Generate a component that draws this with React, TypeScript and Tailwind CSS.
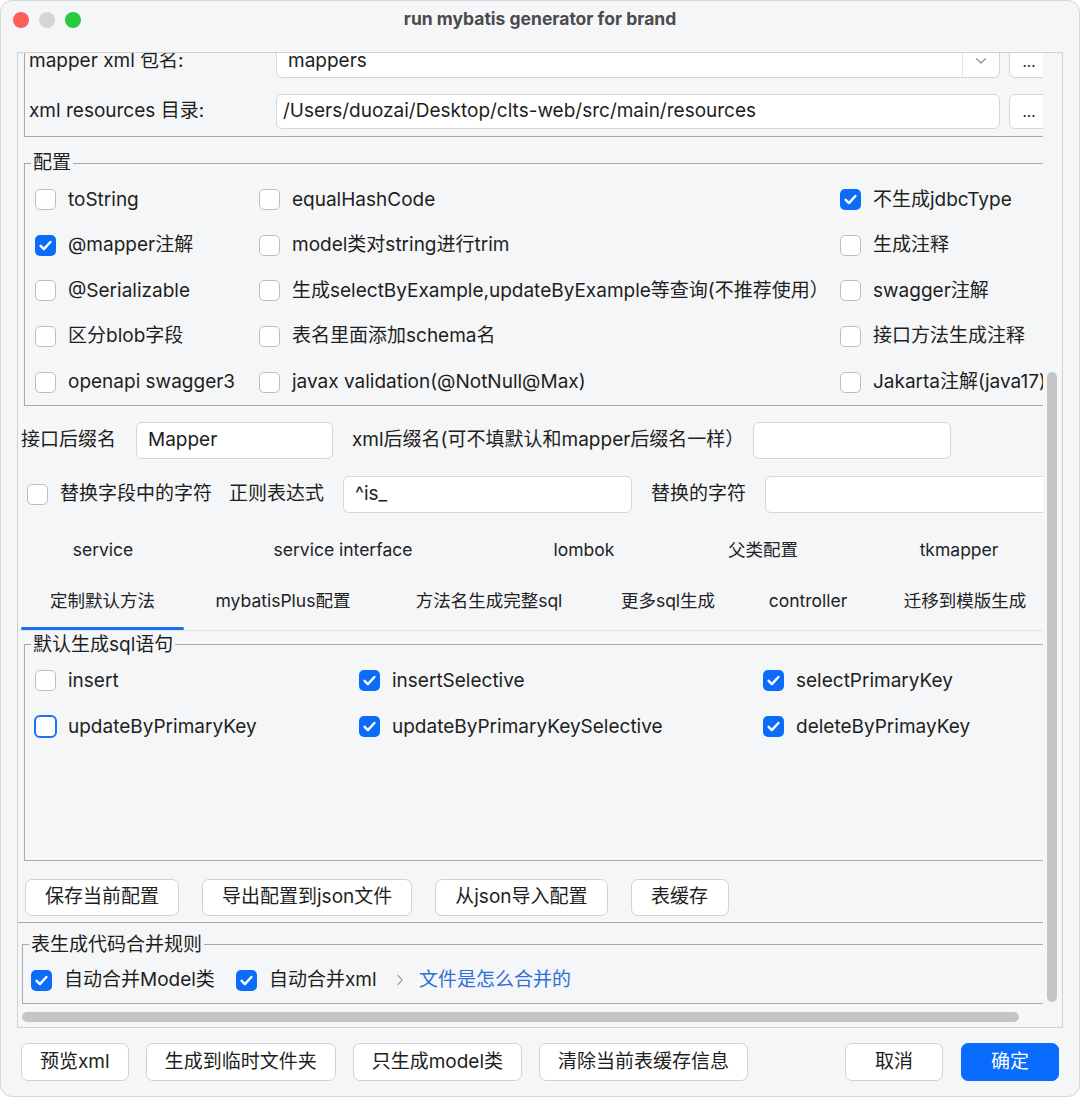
import React from 'react'

const labelColor = 'text-[#1e1e20]'

function Check({ checked = false, focus = false }: { checked?: boolean; focus?: boolean }) {
  if (checked) {
    return (
      <span className="flex h-[21px] w-[21px] shrink-0 items-center justify-center rounded-[5px] bg-[#0b6cf9]">
        <svg width="21" height="21" viewBox="0 0 21 21" fill="none">
          <path d="M5.6 10.8 L8.9 14.1 L15.4 7" stroke="white" strokeWidth="2.4" strokeLinecap="round" strokeLinejoin="round" />
        </svg>
      </span>
    )
  }
  if (focus) {
    return <span className="-m-px h-[23px] w-[23px] shrink-0 rounded-[6px] border-2 border-[#1a73f7] bg-white" />
  }
  return <span className="h-[21px] w-[21px] shrink-0 rounded-[5px] border border-[#b9bdca] bg-white" />
}

function CheckItem({ label, checked, focus }: { label: string; checked?: boolean; focus?: boolean }) {
  return (
    <div className="flex items-center gap-[12px] whitespace-nowrap">
      <Check checked={checked} focus={focus} />
      <span className={labelColor}>{label}</span>
    </div>
  )
}

function Field({ value, className = '' }: { value?: string; className?: string }) {
  return (
    <div className={`flex h-full items-center whitespace-nowrap rounded-[6px] border border-[#d3d6dc] bg-white pl-[11px] ${className}`}>
      {value}
    </div>
  )
}

function Btn({ children, primary = false, h = 'h-[37px]', px = 'px-[19px]' }: { children: React.ReactNode; primary?: boolean; h?: string; px?: string }) {
  return (
    <button
      className={`${h} ${px} min-w-[98px] whitespace-nowrap rounded-[7px] border ${
        primary ? 'border-[#0a6cfe] bg-[#0a6cfe] text-white' : 'border-[#cfd2d8] bg-white text-[#1e1e20]'
      }`}
    >
      {children}
    </button>
  )
}

function Legend({ children }: { children: React.ReactNode }) {
  return <legend className="ml-[6px] px-[2px] leading-[26px] text-[#1e1e20]">{children}</legend>
}

const config: [string, boolean][] = [
  ['toString', false],
  ['equalHashCode', false],
  ['不生成jdbcType', true],
  ['@mapper注解', true],
  ['model类对string进行trim', false],
  ['生成注释', false],
  ['@Serializable', false],
  ['生成selectByExample,updateByExample等查询(不推荐使用）', false],
  ['swagger注解', false],
  ['区分blob字段', false],
  ['表名里面添加schema名', false],
  ['接口方法生成注释', false],
  ['openapi swagger3', false],
  ['javax validation(@NotNull@Max)', false],
  ['Jakarta注解(java17)', false],
]

const tabsTop: [string, number][] = [
  ['service', 164],
  ['service interface', 316],
  ['lombok', 166],
  ['父类配置', 192],
  ['tkmapper', 200],
]

const tabsBottom: [string, number][] = [
  ['定制默认方法', 163],
  ['mybatisPlus配置', 198],
  ['方法名生成完整sql', 214],
  ['更多sql生成', 144],
  ['controller', 136],
  ['迁移到模版生成', 178],
]

export default function App() {
  return (
    <div className="h-[1097px] w-[1080px] bg-white font-['Inter','Noto_Sans_CJK_SC',sans-serif] text-[19px] text-[#1e1e20]">
      <div className="flex h-full flex-col overflow-hidden rounded-[12px] border border-[#d6d7da] bg-[#f5f6f8]">
        {/* title bar */}
        <div className="grid h-[37px] shrink-0 grid-cols-[1fr_auto_1fr] items-center">
          <div className="flex gap-[10px] pl-[12px]">
            <span className="h-[16px] w-[16px] rounded-full bg-[#ff5f57]" />
            <span className="h-[16px] w-[16px] rounded-full bg-[#d5d5d8]" />
            <span className="h-[16px] w-[16px] rounded-full bg-[#28c840]" />
          </div>
          <span className="text-[17.5px] font-bold text-[#4b4b4e]">run mybatis generator for brand</span>
          <div />
        </div>

        {/* scroll pane */}
        <div className="ml-[16px] mt-[14px] grid h-[976px] w-[1046px] shrink-0 grid-cols-[1025px_19px] grid-rows-[952px_22px] border border-[#d0d2d6]">
          <div className="overflow-hidden">
            <div className="-mt-[9px] w-[1049px]">
              {/* package panel, scrolled partly out of view */}
              <div className="mx-[6px] border-x border-b border-[#a9a9a9] pb-[7px] pl-[4px]">
                <div className="flex h-[34px] items-center">
                  <span className="w-[247px] whitespace-nowrap leading-[12px]">mapper xml 包名:</span>
                  <div className="flex h-full w-[724px] rounded-[6px] border border-[#d3d6dc] bg-white">
                    <span className="flex flex-1 items-center pl-[11px] leading-[12px]">mappers</span>
                    <span className="flex w-[37px] items-center justify-center border-l border-[#e1e3e7]">
                      <svg width="12" height="8" viewBox="0 0 12 8" fill="none">
                        <path d="M1.5 1.8 L6 6 L10.5 1.8" stroke="#8d8f94" strokeWidth="1.2" strokeLinecap="round" strokeLinejoin="round" />
                      </svg>
                    </span>
                  </div>
                  <button className="ml-[9px] h-full w-[40px] rounded-[6px] border border-[#d3d6dc] bg-white text-[15px] leading-none">...</button>
                </div>
                <div className="mt-[16px] flex h-[35px] items-center">
                  <span className="w-[247px] whitespace-nowrap">xml resources 目录:</span>
                  <Field value="/Users/duozai/Desktop/clts-web/src/main/resources" className="w-[724px] !pl-[6px]" />
                  <button className="ml-[9px] h-full w-[40px] rounded-[6px] border border-[#d3d6dc] bg-white text-[15px] leading-none">...</button>
                </div>
              </div>

              {/* 配置 */}
              <fieldset className="ml-[6px] mt-[13px] w-[1037px] border border-[#a9a9a9]">
                <Legend>配置</Legend>
                <div className="grid grid-cols-[224px_581px_1fr] auto-rows-[45.6px] items-center pl-[10px] pt-[1px]">
                  {config.map(([label, checked]) => (
                    <CheckItem key={label} label={label} checked={checked} />
                  ))}
                </div>
              </fieldset>

              {/* suffix row */}
              <div className="mt-[16px] flex h-[37px] items-center">
                <span className="w-[118px] whitespace-nowrap pl-[3px]">接口后缀名</span>
                <Field value="Mapper" className="w-[197px]" />
                <span className="w-[420px] whitespace-nowrap pl-[19px]">xml后缀名(可不填默认和mapper后缀名一样）</span>
                <Field className="w-[198px]" />
              </div>

              {/* replace row */}
              <div className="mt-[17px] flex h-[37px] items-center">
                <div className="w-[211px] pl-[9px]">
                  <CheckItem label="替换字段中的字符" />
                </div>
                <span className="w-[114px] whitespace-nowrap">正则表达式</span>
                <Field value="^is_" className="w-[289px]" />
                <span className="w-[133px] whitespace-nowrap pl-[19px]">替换的字符</span>
                <Field className="flex-1" />
              </div>

              {/* tabs */}
              <div className="mt-[12px] text-[17.5px] text-[#222224]">
                <div className="flex h-[51px] items-center pl-[3px]">
                  {tabsTop.map(([t, w]) => (
                    <span key={t} className="shrink-0 whitespace-nowrap text-center" style={{ width: w }}>
                      {t}
                    </span>
                  ))}
                </div>
                <div className="flex pl-[3px]">
                  {tabsBottom.map(([t, w], i) => (
                    <div key={t} className="flex h-[54px] shrink-0 flex-col" style={{ width: w }}>
                      <span className="flex h-[51px] items-center justify-center whitespace-nowrap">{t}</span>
                      {i === 0 && <span className="h-[3px] rounded-full bg-[#1670f0]" />}
                    </div>
                  ))}
                </div>
              </div>

              {/* tab content */}
              <div className="border-b border-t border-b-[#a9a9a9] border-t-[#e3e4e7] pb-[6px]">
                <fieldset className="ml-[6px] mt-[1px] w-[1037px] border border-[#a9a9a9]">
                  <Legend>默认生成sql语句</Legend>
                  <div className="h-[202px]">
                    <div className="grid grid-cols-[324px_404px_1fr] auto-rows-[46px] items-center pl-[10px]">
                      <CheckItem label="insert" />
                      <CheckItem label="insertSelective" checked />
                      <CheckItem label="selectPrimaryKey" checked />
                      <CheckItem label="updateByPrimaryKey" focus />
                      <CheckItem label="updateByPrimaryKeySelective" checked />
                      <CheckItem label="deleteByPrimayKey" checked />
                    </div>
                  </div>
                </fieldset>
                <div className="mt-[18px] flex gap-[23px] pl-[7px]">
                  <Btn>保存当前配置</Btn>
                  <Btn>导出配置到json文件</Btn>
                  <Btn>从json导入配置</Btn>
                  <Btn>表缓存</Btn>
                </div>
              </div>

              {/* merge rules */}
              <fieldset className="ml-[4px] mt-[9px] w-[1043px] border border-[#a9a9a9]">
                <Legend>表生成代码合并规则</Legend>
                <div className="flex h-[45px] items-center pl-[8px]">
                  <div className="w-[205px]">
                    <CheckItem label="自动合并Model类" checked />
                  </div>
                  <div className="w-[160px]">
                    <CheckItem label="自动合并xml" checked />
                  </div>
                  <span className="flex w-[23px] items-center">
                    <svg width="8" height="12" viewBox="0 0 8 12" fill="none">
                      <path d="M2 1.5 L6.2 6 L2 10.5" stroke="#a2a4a8" strokeWidth="1.3" strokeLinecap="round" strokeLinejoin="round" />
                    </svg>
                  </span>
                  <span className="whitespace-nowrap text-[#2f6fd9]">文件是怎么合并的</span>
                </div>
              </fieldset>
            </div>
          </div>

          {/* vertical scrollbar */}
          <div className="pl-[4px] pt-[319px]">
            <div className="h-[630px] w-[10px] rounded-full bg-[#c5c5c8]" />
          </div>

          {/* horizontal scrollbar */}
          <div className="pl-[4px] pt-[7px]">
            <div className="h-[10px] w-[997px] rounded-full bg-[#c5c5c8]" />
          </div>
          <div />
        </div>

        {/* bottom buttons */}
        <div className="mx-[20px] mt-[15px] flex justify-between">
          <div className="flex gap-[17px]">
            <Btn h="h-[38px]" px="px-[18px]">预览xml</Btn>
            <Btn h="h-[38px]" px="px-[18px]">生成到临时文件夹</Btn>
            <Btn h="h-[38px]" px="px-[18px]">只生成model类</Btn>
            <Btn h="h-[38px]" px="px-[18px]">清除当前表缓存信息</Btn>
          </div>
          <div className="flex gap-[18px]">
            <Btn h="h-[38px]">取消</Btn>
            <Btn h="h-[38px]" primary>
              确定
            </Btn>
          </div>
        </div>
      </div>
    </div>
  )
}
